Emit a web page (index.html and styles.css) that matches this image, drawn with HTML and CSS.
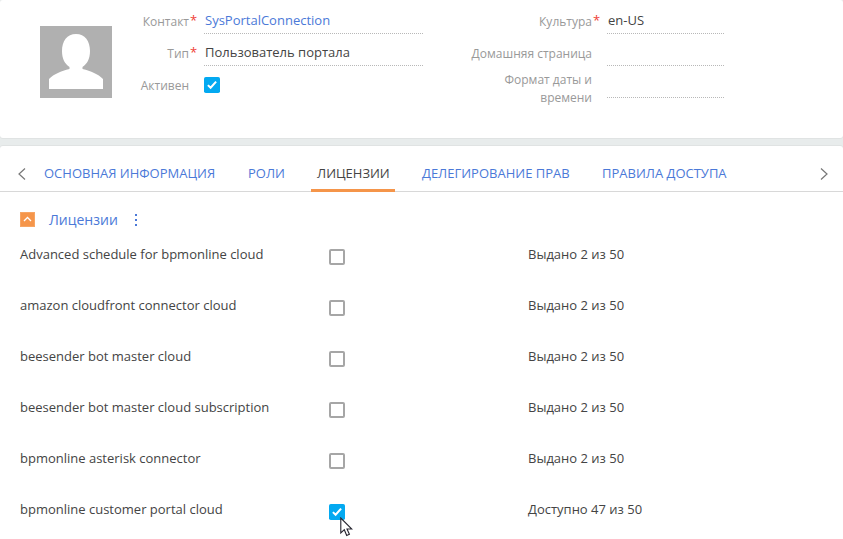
FILE: index.html
```html
<!DOCTYPE html>
<html lang="ru">
<head>
<meta charset="utf-8">
<title>SysPortalConnection</title>
<link rel="stylesheet" href="styles.css">
</head>
<body>
<svg class="defs" width="0" height="0"><symbol id="check" viewBox="0 0 16 16"><rect width="16" height="16" rx="1.8" fill="#03a9f1"/><path d="M3.900 8.100 6.600 10.700 12.100 4.600" fill="none" stroke="#fff" stroke-width="2"/></symbol></svg>
<section class="card profile">
  <svg class="avatar" viewBox="0 0 72 72"><rect width="72" height="72" fill="#b0b0b0"/><path d="M36 8C45 8 50 15 50 25C50 33 47 38 42.500 41V43C51 45 58 48 63 53V63H9V53C14 48 21 45 29.500 43V41C25 38 22 33 22 25C22 15 27 8 36 8Z" fill="#fff"/></svg>
  <div class="fields main-fields">
    <div class="field"><label class="required">Контакт</label><div class="value link">SysPortalConnection</div></div>
    <div class="field"><label class="required">Тип</label><div class="value">Пользователь портала</div></div>
    <div class="field"><label>Активен</label><svg class="box active-box"><use href="#check"/></svg></div>
  </div>
  <div class="fields extra-fields">
    <div class="field"><label class="required">Культура</label><div class="value">en-US</div></div>
    <div class="field"><label>Домашняя страница</label><div class="value"></div></div>
    <div class="field tall"><label>Формат даты и времени</label><div class="value"></div></div>
  </div>
</section>
<section class="card details">
  <nav class="tabs">
    <svg class="arrow" viewBox="0 0 8 12"><path d="M7 .5 1 6 7 11.500"/></svg>
    <div class="tab-list">
      <a class="tab t1">ОСНОВНАЯ ИНФОРМАЦИЯ</a><a class="tab t2">РОЛИ</a><a class="tab t3 current">ЛИЦЕНЗИИ</a><a class="tab t4">ДЕЛЕГИРОВАНИЕ ПРАВ</a><a class="tab t5">ПРАВИЛА ДОСТУПА</a>
    </div>
    <svg class="arrow" viewBox="0 0 8 12"><path d="M1 .5 7 6 1 11.500"/></svg>
  </nav>
  <header class="group">
    <svg class="toggle" viewBox="0 0 15 15"><rect x=".5" y=".5" width="14" height="14" fill="#f5954a" stroke="#f7a563"/><path d="M4 9 7.500 5.500 11 9" fill="none" stroke="#fff" stroke-width="1.300"/></svg>
    <h2>Лицензии</h2>
    <svg class="dots" viewBox="0 0 2 12"><path d="M0 0h2v2H0zM0 5h2v2H0zM0 10h2v2H0z" fill="#4b79d8"/></svg>
  </header>
  <div class="list">
    <div class="row"><span>Advanced schedule for bpmonline cloud</span><i class="box empty"></i><span>Выдано 2 из 50</span></div>
    <div class="row"><span>amazon cloudfront connector cloud</span><i class="box empty"></i><span>Выдано 2 из 50</span></div>
    <div class="row"><span>beesender bot master cloud</span><i class="box empty"></i><span>Выдано 2 из 50</span></div>
    <div class="row"><span>beesender bot master cloud subscription</span><i class="box empty"></i><span>Выдано 2 из 50</span></div>
    <div class="row"><span>bpmonline asterisk connector</span><i class="box empty"></i><span>Выдано 2 из 50</span></div>
    <div class="row"><span>bpmonline customer portal cloud</span><svg class="box"><use href="#check"/></svg><span>Доступно 47 из 50</span></div>
  </div>
</section>
<svg class="cursor" viewBox="0 0 13 20"><path d="M.8 1V16L4.300 12.700 6.700 18.500 9.400 17.300 7 12H11.800Z" fill="#fff" stroke="#25232e" stroke-width="1.100"/></svg>
</body>
</html>
```
FILE: styles.css
```css
* { box-sizing: border-box; }
body { margin: 0; width: 843px; height: 539px; overflow: hidden; background: #e8ecec; color: #444; font: 13px/18px "Open Sans", sans-serif; }
svg { display: block; flex: none; }
.defs { position: absolute; }
.card { background: #fff; border-radius: 3px; }
.profile { display: flex; height: 138px; margin-bottom: 8px; box-shadow: 0 1px 0 #e0e3e3; }
.avatar { width: 72px; height: 72px; margin: 26px 0 0 40px; }
.fields { padding-top: 2px; }
.main-fields { width: 311px; }
.extra-fields { width: 302px; }
.field { display: flex; height: 32px; }
label { position: relative; flex: none; padding-top: 11px; margin-right: 15px; font-size: 12px; color: #999; text-align: right; }
.main-fields label { width: 77px; }
.extra-fields label { width: 169px; }
.extra-fields .tall label { padding: 5px 0 0 69px; }
.required::after { content: "*"; position: absolute; left: calc(100% + 1px); top: 9px; font-size: 13px; color: #ef4136; }
.value { flex: 1; padding: 9px 0 0 1px; height: 32px; background: repeating-linear-gradient(90deg, #b8b8b8 0 1px, transparent 1px 2px) bottom / 100% 1px no-repeat; }
.extra-fields .value { flex: none; width: 118px; }
.link { color: #4b79d8; }
.box { display: block; width: 16px; height: 16px; }
.active-box { margin-top: 11px; }
.details { height: 393px; border-radius: 3px 3px 0 0; box-shadow: 0 -1px 0 #e0e3e3; }
.tabs { display: flex; align-items: flex-start; height: 46px; padding: 18px 15px 0 18px; border-bottom: 1px solid #d8d8d8; }
.arrow { width: 8px; height: 12px; margin-top: 4px; fill: none; stroke: #777; stroke-width: 1.2; }
.tab-list { display: flex; flex: 1; padding-left: 12px; }
.tab { height: 28px; padding-left: 6px; color: #4b79d8; white-space: nowrap; }
.t1 { width: 204px; }
.t2 { width: 69px; }
.t3 { width: 84px; margin-right: 21px; }
.t4 { width: 180px; }
.current { color: #444; border-bottom: 3px solid #f5954a; }
.group { display: flex; align-items: center; height: 50px; padding: 5px 0 0 20px; }
.toggle { width: 15px; height: 15px; }
h2 { width: 71px; margin: 0 0 0 14px; font-weight: 400; font-size: 14px; line-height: 20px; color: #4b79d8; }
.dots { width: 2px; height: 12px; margin-left: 15px; }
.list { padding: 3px 0 0 20px; }
.row { display: grid; grid-template-columns: 309px 199px 1fr; height: 51px; }
.row .box { margin-top: 4px; }
.empty { border: 2px solid #a6a6a6; border-radius: 2px; }
.cursor { position: absolute; left: 340px; top: 517px; width: 13px; height: 20px; }
```
